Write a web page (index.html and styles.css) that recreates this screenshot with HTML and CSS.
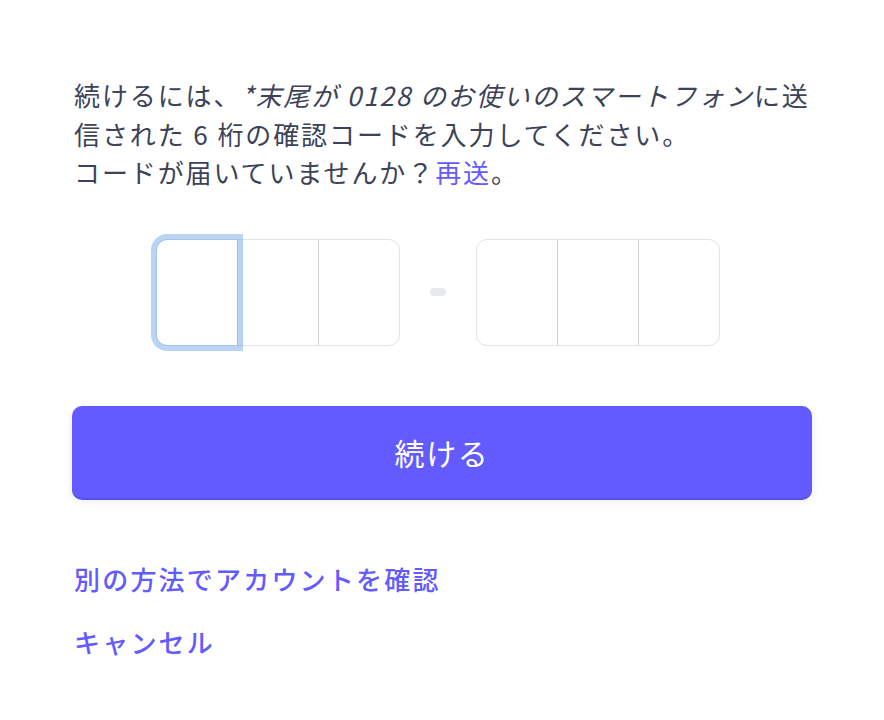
FILE: index.html
```html
<!DOCTYPE html>
<html lang="ja">
<head>
<meta charset="utf-8">
<link rel="stylesheet" href="styles.css">
</head>
<body>
<main class="page">
  <p class="intro">続けるには、<em>*末尾が 0128 のお使いのスマートフォン</em>に送信された 6 桁の確認コードを入力してください。<br>コードが届いていませんか？<a class="link" href="#">再送</a>。</p>
  <div class="otp">
    <div class="otp-group">
      <div class="cell cell-focus"></div>
      <div class="cell"></div>
      <div class="cell"></div>
    </div>
    <span class="dash"></span>
    <div class="otp-group">
      <div class="cell"></div>
      <div class="cell"></div>
      <div class="cell"></div>
    </div>
  </div>
  <button class="primary" type="button">続ける</button>
  <nav class="alt-links">
    <a class="link strong" href="#">別の方法でアカウントを確認</a>
    <a class="link strong" href="#">キャンセル</a>
  </nav>
</main>
</body>
</html>
```

FILE: styles.css
```css
html, body {
  margin: 0;
  padding: 0;
  background: #ffffff;
}

body {
  font-family: "Noto Sans CJK JP", "Noto Sans", sans-serif;
  color: #3c4257;
}

.page {
  padding: 76px 72px 0 72px;
  display: flex;
  flex-direction: column;
}

.intro {
  margin: 0;
  padding-left: 2px;
  font-size: 26px;
  line-height: 38.5px;
  letter-spacing: 1.9px;
}

.intro em {
  font-style: italic;
}

.link {
  color: #635bff;
  text-decoration: none;
}

.otp {
  margin-top: 47px;
  padding-left: 84px;
  display: flex;
  align-items: center;
  gap: 30px;
}

.otp-group {
  display: flex;
  border: 1px solid #e3e3e6;
  border-radius: 11px;
}

.cell {
  width: 80px;
  height: 105px;
}

.cell + .cell {
  border-left: 1px solid #d2d2d6;
}

.cell-focus {
  position: relative;
  z-index: 1;
  border-radius: 10px 0 0 10px;
  box-shadow: 0 0 0 6px rgba(74, 144, 226, 0.38);
}

.dash {
  width: 16px;
  height: 8px;
  border-radius: 4px;
  background: #e8e9ee;
}

.primary {
  margin-top: 60px;
  height: 92px;
  width: 100%;
  border: none;
  border-radius: 10px;
  background: #635bff;
  color: #ffffff;
  font-family: inherit;
  font-size: 30px;
  letter-spacing: 1.6px;
  box-shadow: 0 2px 0 #5851e6, 0 3px 8px rgba(50, 50, 93, 0.1);
  cursor: pointer;
}

.alt-links {
  margin-top: 62px;
  display: flex;
  flex-direction: column;
  gap: 24.5px;
  padding-left: 2px;
}

.strong {
  font-size: 26px;
  line-height: 38.5px;
  letter-spacing: 2.2px;
  font-weight: 500;
}
```
